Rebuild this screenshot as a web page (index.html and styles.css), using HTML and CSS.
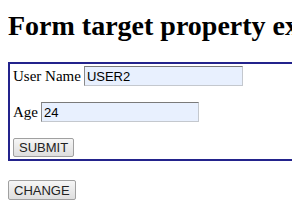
FILE: index.html
```html
<!DOCTYPE html>
<html lang="en">
<head>
    <title>Form target property example</title>
    <link rel="stylesheet" href="styles.css">
</head>
<body>
    <h1>Form target property example</h1>

    <form id="userForm" class="form-box">
        <div class="form-row">
            <label for="userName">User Name</label>
            <input type="text" id="userName" class="name-input" value="USER2">
        </div>

        <div class="form-row">
            <label for="age">Age</label>
            <input type="text" id="age" class="age-input" value="24">
        </div>

        <div class="form-row">
            <button type="submit">SUBMIT</button>
        </div>
    </form>

    <button type="button" class="change-btn">CHANGE</button>
</body>
</html>
```

FILE: styles.css
```css
html, body {
    overflow: hidden;
}

body {
    font-family: "Liberation Serif", "Times New Roman", serif;
    background-color: #fff;
    color: #000;
    margin: 8px;
}

h1 {
    font-size: 28px;
    font-weight: bold;
    white-space: nowrap;
    margin: 3px 0 21px 0;
    line-height: 30px;
}

.form-box {
    width: 290px;
    box-sizing: border-box;
    border: 2px solid #23238c;
    padding: 2px 3px;
}

.form-row {
    display: flex;
    align-items: center;
    gap: 3px;
    margin-bottom: 16px;
    font-size: 15px;
}

.form-row:last-child {
    margin-bottom: 0;
}

input[type="text"] {
    height: 20px;
    box-sizing: border-box;
    padding: 0 2px;
    margin: 0;
    font-family: "Liberation Sans", Arial, sans-serif;
    font-size: 13px;
    background-color: #e8f0fe;
    border: 1px solid #c4c8ce;
    border-top-color: #7a7a7a;
    border-left-color: #8a8a8a;
}

.name-input {
    width: 159px;
}

.age-input {
    width: 158px;
}

button {
    font-family: "Liberation Sans", Arial, sans-serif;
    font-size: 13px;
    height: 19px;
    padding: 0 5px;
    margin: 0;
    color: #222;
    background: linear-gradient(#f6f6f6, #dedede);
    border: 1px solid #a0a0a0;
    border-radius: 2px;
}

.change-btn {
    margin-top: 19px;
    height: 20px;
}
```
